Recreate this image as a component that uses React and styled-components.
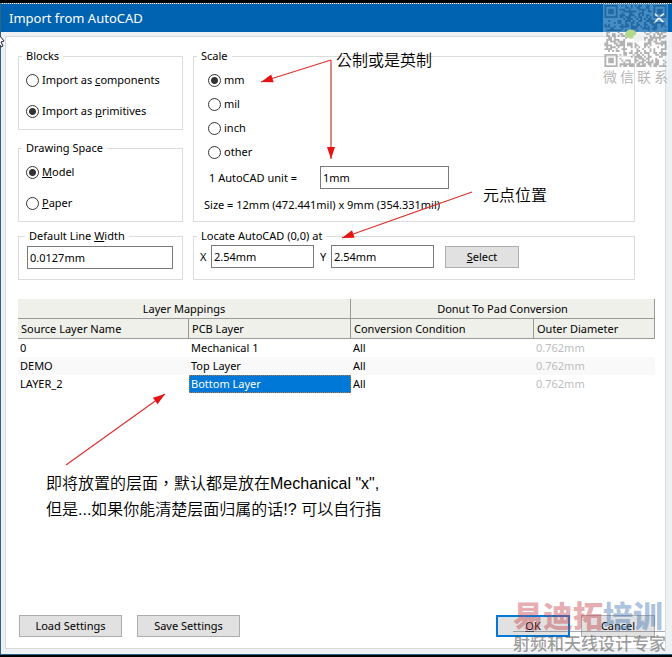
import { useState } from "react";
import styled, { createGlobalStyle } from "styled-components";

const GlobalStyle = createGlobalStyle`
  * {
    box-sizing: border-box;
  }
  body {
    margin: 0;
    background: #000;
    color: #000;
    font-family: "Noto Sans", "Noto Sans CJK SC", sans-serif;
    font-size: 11px;
    line-height: 16px;
  }
`

const Page = styled.div`
  position: relative;
  display: flex;
  flex-direction: column;
  min-height: 100vh;
  padding: 3px 0 2px;
  overflow: hidden;
`

const Dialog = styled.main`
  flex: 1;
  display: flex;
  flex-direction: column;
  border-top: 1px dotted #5f87a0;
  border-left: 1px solid #2d6385;
  border-bottom: 1px solid #2d6385;
  background: #eef1f4;
`

const TitleBar = styled.header`
  display: flex;
  align-items: center;
  justify-content: space-between;
  height: 28px;
  padding: 0 8px;
  background: #0063b1;
  color: #fff;
`

const Title = styled.h1`
  margin: 0;
  font-size: 13px;
  font-weight: 400;
  line-height: 26px;
`

const CloseButton = styled.button`
  display: flex;
  padding: 0;
  border: none;
  background: none;
  color: #fff;
`

const Panel = styled.div`
  flex: 1;
  display: flex;
  flex-direction: column;
  margin: 4px 6px 5px 4px;
  padding: 11px 10px 11px 12px;
  border: 1px solid #d5dadc;
  background: #fff;
`

const Groups = styled.form`
  display: grid;
  grid-template-columns: 165px 1fr;
  column-gap: 10px;
  row-gap: 6px;
  margin-right: 20px;
`

const Stack = styled.div`
  display: grid;
  gap: 10px;
`

const Group = styled.fieldset`
  min-width: 0;
  margin: 0;
  padding: ${(p) => p.$pad || "8px 7px 0"};
  border: 1px solid #dcdcdc;
  min-height: ${(p) => p.$height || "52px"};
`

const Legend = styled.legend`
  margin-left: ${(p) => p.$shift || "-4px"};
  padding: 0 4px;
`

const Options = styled.div`
  display: grid;
  gap: ${(p) => p.$gap};
  padding-left: ${(p) => p.$indent || "0"};
`

const Option = styled.label`
  display: flex;
  align-items: center;
  gap: 3px;
`

const Radio = styled.input`
  appearance: none;
  width: 13px;
  height: 13px;
  margin: 0;
  border: 1px solid #333;
  border-radius: 50%;
  background: #fff;
  &:checked {
    background: radial-gradient(circle, #333 3px, #fff 4px);
  }
`

const Field = styled.div`
  display: flex;
  align-items: center;
  margin-top: ${(p) => p.$top || "0"};
`

const UnitLabel = styled.label`
  width: 116px;
  padding-left: 5px;
`

const AxisLabel = styled.label`
  width: 17px;
  padding-left: 6px;
`

const Input = styled.input`
  width: ${(p) => p.$width};
  height: 23px;
  padding: 0 2px;
  border: 1px solid #7a7a7a;
  background: #fff;
  color: #000;
  font: inherit;
`

const Size = styled.p`
  margin: 8px 0 0;
`

const Button = styled.button`
  width: ${(p) => p.$width || "74px"};
  height: 22px;
  padding: 0;
  border: ${(p) => (p.$primary ? "2px solid #0078d7" : "1px solid #adadad")};
  background: #e1e1e1;
  color: #000;
  font: inherit;
`

const SelectButton = styled(Button)`
  margin-left: 11px;
`

const Table = styled.table`
  width: 100%;
  margin-top: 19px;
  table-layout: fixed;
  border-collapse: separate;
  border-spacing: 0;
`

const Col = styled.col`
  width: ${(p) => p.$width};
`

const Head = styled.th`
  height: 20px;
  padding: 0 3px;
  border-right: 1px solid #9a9a9a;
  border-bottom: 1px solid #9a9a9a;
  background: #f0f0eb;
  font-weight: 400;
  text-align: ${(p) => (p.$group ? "center" : "left")};
`

const Row = styled.tr`
  background: ${(p) => (p.$odd ? "#f9f9f9" : "#fff")};
`

const Cell = styled.td`
  height: 18px;
  padding: 0 2px;
  color: ${(p) => (p.$selected ? "#fff" : p.$muted ? "#bdbdbd" : "#000")};
  background: ${(p) => (p.$selected ? "#0078d7" : "transparent")};
  outline: ${(p) => (p.$selected ? "1px dotted #b07a50" : "none")};
  outline-offset: -1px;
`

const Note = styled.p`
  margin: 78px 0 20px 28px;
  font-family: "Liberation Sans", "Noto Sans CJK TC", sans-serif;
  font-size: 16px;
  font-weight: 350;
  line-height: 26px;
`

const Footer = styled.footer`
  display: flex;
  gap: 15px;
  margin-top: auto;
  padding-left: 1px;
`

const Confirm = styled.div`
  display: flex;
  gap: 11px;
  margin-left: auto;
`

const Callout = styled.span`
  position: absolute;
  left: ${(p) => p.$x};
  top: ${(p) => p.$y};
  font-family: "Noto Sans CJK TC", sans-serif;
  font-size: 16px;
  font-weight: 350;
  line-height: 24px;
`

const Arrows = styled.svg`
  position: absolute;
  top: 0;
  left: 0;
  overflow: visible;
  pointer-events: none;
`

const QrStamp = styled.div`
  position: absolute;
  top: 4px;
  right: 4px;
  display: grid;
  justify-items: center;
  width: 65px;
  color: #b0b0b0;
  font-size: 14px;
  font-weight: 350;
  line-height: 18px;
  white-space: nowrap;
  pointer-events: none;
`

const QrCaption = styled.span`
  display: flex;
  gap: 3px;
`

const Brand = styled.div`
  position: absolute;
  right: 7px;
  bottom: 4px;
  width: 152px;
  font-family: "Noto Sans CJK SC", sans-serif;
  pointer-events: none;
`

const BrandName = styled.div`
  padding-bottom: 3px;
  border-bottom: 1px solid rgba(110, 110, 120, 0.6);
  color: rgba(200, 70, 80, 0.45);
  font-size: 30px;
  font-weight: 900;
  line-height: 28px;
  white-space: nowrap;
`

const BrandBlue = styled.span`
  color: rgba(70, 120, 180, 0.45);
`

const BrandLine = styled.div`
  color: rgba(90, 90, 90, 0.6);
  font-size: 17px;
  font-weight: 500;
  line-height: 21px;
  white-space: nowrap;
`

const units = ["mm", "mil", "inch", "other"]

const layers = [
  { source: "0", pcb: "Mechanical 1" },
  { source: "DEMO", pcb: "Top Layer" },
  { source: "LAYER_2", pcb: "Bottom Layer" },
]

const arrows = [
  { from: [331, 60], to: [261, 82] },
  { from: [331, 60], to: [331, 159] },
  { from: [472, 192], to: [342, 238] },
  { from: [66, 465], to: [165, 394] },
]

const QR_SIZE = 33

// corners of the code are kept free for the three finder squares
const inFinder = (x, y) =>
  (x < 8 && y < 8) || (x > QR_SIZE - 9 && y < 8) || (x < 8 && y > QR_SIZE - 9)

const qrPath = () => {
  let seed = 17
  let d = ""
  for (let y = 0; y < QR_SIZE; y++) {
    for (let x = 0; x < QR_SIZE; x++) {
      seed = (seed * 1103515245 + 12345) % 2147483648
      const middle = x > 11 && x < 21 && y > 13 && y < 20
      if (!inFinder(x, y) && !middle && seed / 2147483648 > 0.48) {
        d += `M${x} ${y}h1v1h-1z`
      }
    }
  }
  return d
}

const qr = qrPath()
const finders = [[0, 0], [QR_SIZE - 7, 0], [0, QR_SIZE - 7]]

function QrCode({ ink }) {
  return (
    <g fill={ink}>
      <path d={qr} />
      {finders.map(([x, y]) => (
        <path
          key={`${x}-${y}`}
          fillRule="evenodd"
          d={`M${x} ${y}h7v7h-7zM${x + 1} ${y + 1}v5h5v-5zM${x + 2} ${y + 2}h3v3h-3z`}
        />
      ))}
    </g>
  )
}

function Arrow({ from, to }) {
  const angle = (Math.atan2(to[1] - from[1], to[0] - from[0]) * 180) / Math.PI
  return (
    <g>
      <line x1={from[0]} y1={from[1]} x2={to[0]} y2={to[1]} stroke="#d8332f" strokeWidth="1.2" />
      <path d="M0 0L-12 -4V4z" fill="#e81212" transform={`translate(${to[0]} ${to[1]}) rotate(${angle})`} />
    </g>
  )
}

function App() {
  const [blocks, setBlocks] = useState("primitives")
  const [space, setSpace] = useState("model")
  const [unit, setUnit] = useState("mm")
  const [selected, setSelected] = useState(2)

  return (
    <Page>
      <GlobalStyle />
      <Dialog>
        <TitleBar>
          <Title>Import from AutoCAD</Title>
          <CloseButton aria-label="Close">
            <svg width="10" height="10" viewBox="0 0 10 10" stroke="currentColor" strokeWidth="1.6">
              <path d="M0.5 0.5L9.5 9.5M9.5 0.5L0.5 9.5" />
            </svg>
          </CloseButton>
        </TitleBar>

        <Panel>
          <Groups onSubmit={(e) => e.preventDefault()}>
            <Stack>
              <Group $height="82px">
                <Legend>Blocks</Legend>
                <Options $gap="15px">
                  <Option>
                    <Radio type="radio" name="blocks" checked={blocks === "components"} onChange={() => setBlocks("components")} />
                    <span>Import as <u>c</u>omponents</span>
                  </Option>
                  <Option>
                    <Radio type="radio" name="blocks" checked={blocks === "primitives"} onChange={() => setBlocks("primitives")} />
                    <span>Import as <u>p</u>rimitives</span>
                  </Option>
                </Options>
              </Group>
              <Group $height="82px">
                <Legend>Drawing Space</Legend>
                <Options $gap="15px">
                  <Option>
                    <Radio type="radio" name="space" checked={space === "model"} onChange={() => setSpace("model")} />
                    <span><u>M</u>odel</span>
                  </Option>
                  <Option>
                    <Radio type="radio" name="space" checked={space === "paper"} onChange={() => setSpace("paper")} />
                    <span><u>P</u>aper</span>
                  </Option>
                </Options>
              </Group>
            </Stack>

            <Group $pad="8px 10px 0">
              <Legend $shift="-7px">Scale</Legend>
              <Options $gap="8px" $indent="4px">
                {units.map((name) => (
                  <Option key={name}>
                    <Radio type="radio" name="unit" checked={unit === name} onChange={() => setUnit(name)} />
                    <span>{name}</span>
                  </Option>
                ))}
              </Options>
              <Field $top="6px">
                <UnitLabel htmlFor="unit-size">1 AutoCAD unit =</UnitLabel>
                <Input id="unit-size" $width="129px" defaultValue="1mm" />
              </Field>
              <Size>Size = 12mm (472.441mil) x 9mm (354.331mil)</Size>
            </Group>

            <Group $pad="2px 8px 0">
              <Legend $shift="-2px">
                <label htmlFor="line-width">Default Line <u>W</u>idth</label>
              </Legend>
              <Input id="line-width" $width="146px" defaultValue="0.0127mm" />
            </Group>

            <Group $pad="1px 0 0">
              <Legend $shift="3px">Locate AutoCAD (0,0) at</Legend>
              <Field>
                <AxisLabel htmlFor="origin-x">X</AxisLabel>
                <Input id="origin-x" $width="103px" defaultValue="2.54mm" />
                <AxisLabel htmlFor="origin-y">Y</AxisLabel>
                <Input id="origin-y" $width="103px" defaultValue="2.54mm" />
                <SelectButton><u>S</u>elect</SelectButton>
              </Field>
            </Group>
          </Groups>

          <Table>
            <colgroup>
              <Col $width="171px" />
              <Col $width="162px" />
              <Col $width="183px" />
              <Col />
            </colgroup>
            <thead>
              <tr>
                <Head $group colSpan={2}>Layer Mappings</Head>
                <Head $group colSpan={2}>Donut To Pad Conversion</Head>
              </tr>
              <tr>
                <Head>Source Layer Name</Head>
                <Head>PCB Layer</Head>
                <Head>Conversion Condition</Head>
                <Head>Outer Diameter</Head>
              </tr>
            </thead>
            <tbody>
              {layers.map((layer, index) => (
                <Row key={layer.source} $odd={index % 2 === 1}>
                  <Cell>{layer.source}</Cell>
                  <Cell $selected={selected === index} onClick={() => setSelected(index)}>{layer.pcb}</Cell>
                  <Cell>All</Cell>
                  <Cell $muted>0.762mm</Cell>
                </Row>
              ))}
            </tbody>
          </Table>

          <Note>
            即将放置的层面，默认都是放在Mechanical "x",
            <br />
            但是...如果你能清楚层面归属的话!? 可以自行指
          </Note>

          <Footer>
            <Button $width="103px">Load Settings</Button>
            <Button $width="103px">Save Settings</Button>
            <Confirm>
              <Button $primary><u>O</u>K</Button>
              <Button>Cancel</Button>
            </Confirm>
          </Footer>
        </Panel>
      </Dialog>

      <Arrows width="1" height="1" aria-hidden="true">
        {arrows.map((arrow) => (
          <Arrow key={arrow.to.join()} {...arrow} />
        ))}
        <path d="M0 36L4 41L1 42L3 46L1 47L0 45" fill="#fff" stroke="#223" />
      </Arrows>
      <Callout $x="336px" $y="47px">公制或是英制</Callout>
      <Callout $x="483px" $y="182px">元点位置</Callout>

      <QrStamp>
        <svg width="65" height="64" viewBox="-0.5 -0.5 34 34" aria-hidden="true">
          <rect x="-1" y="-0.5" width="35" height="34" fill="#fff" opacity="0.28" />
          <g opacity="0.6">
            <clipPath id="qr-top"><rect x="-1" y="-1" width="36" height="15" /></clipPath>
            <clipPath id="qr-bottom"><rect x="-1" y="14" width="36" height="20" /></clipPath>
            <g clipPath="url(#qr-top)"><QrCode ink="#0b4f8c" /></g>
            <g clipPath="url(#qr-bottom)"><QrCode ink="#808080" /></g>
          </g>
          <ellipse cx="14" cy="15.5" rx="3" ry="2.4" fill="#b5d98c" />
          <ellipse cx="18" cy="17.5" rx="2.8" ry="2" fill="#eef1f0" />
        </svg>
        <QrCaption>
          <span>微</span><span>信</span><span>联</span><span>系</span>
        </QrCaption>
      </QrStamp>

      <Brand>
        <BrandName>易迪拓<BrandBlue>培训</BrandBlue></BrandName>
        <BrandLine>射频和天线设计专家</BrandLine>
      </Brand>
    </Page>
  )
}

export default App
